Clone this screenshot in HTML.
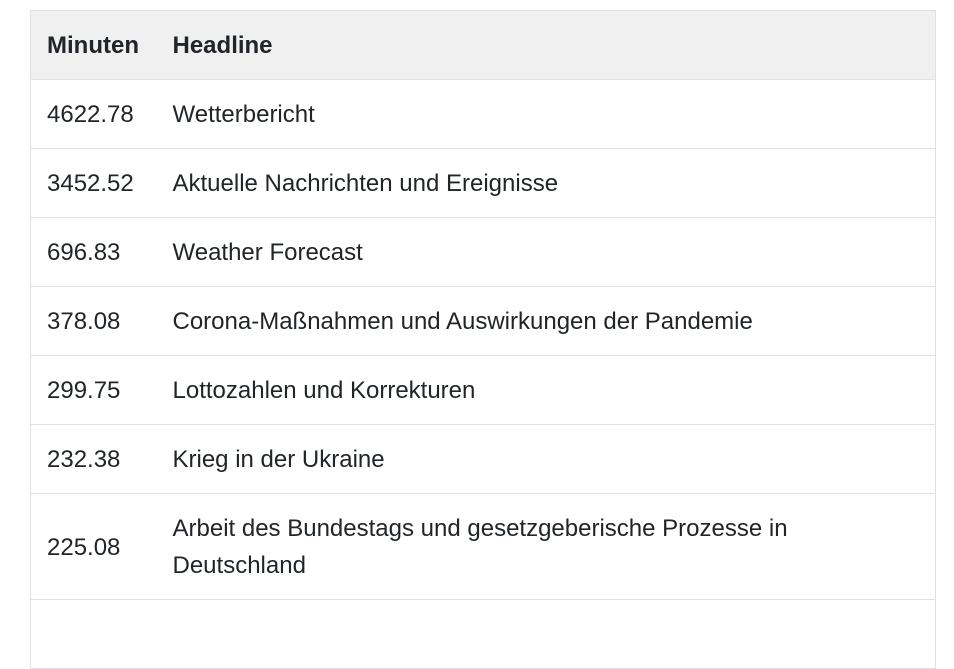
<!DOCTYPE html>
<html><head><style>
html,body{margin:0;padding:0;background:#fff;width:954px;height:608px;overflow:hidden}
table{position:absolute;left:30px;top:10px;width:906px;border-collapse:collapse;table-layout:fixed;font-family:"Liberation Sans",Arial,sans-serif;font-size:24px;color:#212529;border:1px solid #dee2e6}
th,td{padding:16px 16px 15px 16px;line-height:37px;text-align:left;vertical-align:middle;border-top:1px solid #dee2e6;white-space:nowrap}
th{background:#f0f0f0;font-weight:bold}
</style></head><body>
<table>
<colgroup><col style="width:126px"><col></colgroup>
<tr><th>Minuten</th><th>Headline</th></tr>
<tr><td>4622.78</td><td>Wetterbericht</td></tr>
<tr><td>3452.52</td><td>Aktuelle Nachrichten und Ereignisse</td></tr>
<tr><td>696.83</td><td>Weather Forecast</td></tr>
<tr><td>378.08</td><td>Corona-Maßnahmen und Auswirkungen der Pandemie</td></tr>
<tr><td>299.75</td><td>Lottozahlen und Korrekturen</td></tr>
<tr><td>232.38</td><td>Krieg in der Ukraine</td></tr>
<tr><td>225.08</td><td>Arbeit des Bundestags und gesetzgeberische Prozesse in<br>Deutschland</td></tr>
<tr><td>&nbsp;</td><td>&nbsp;</td></tr>
</table>
</body></html>
